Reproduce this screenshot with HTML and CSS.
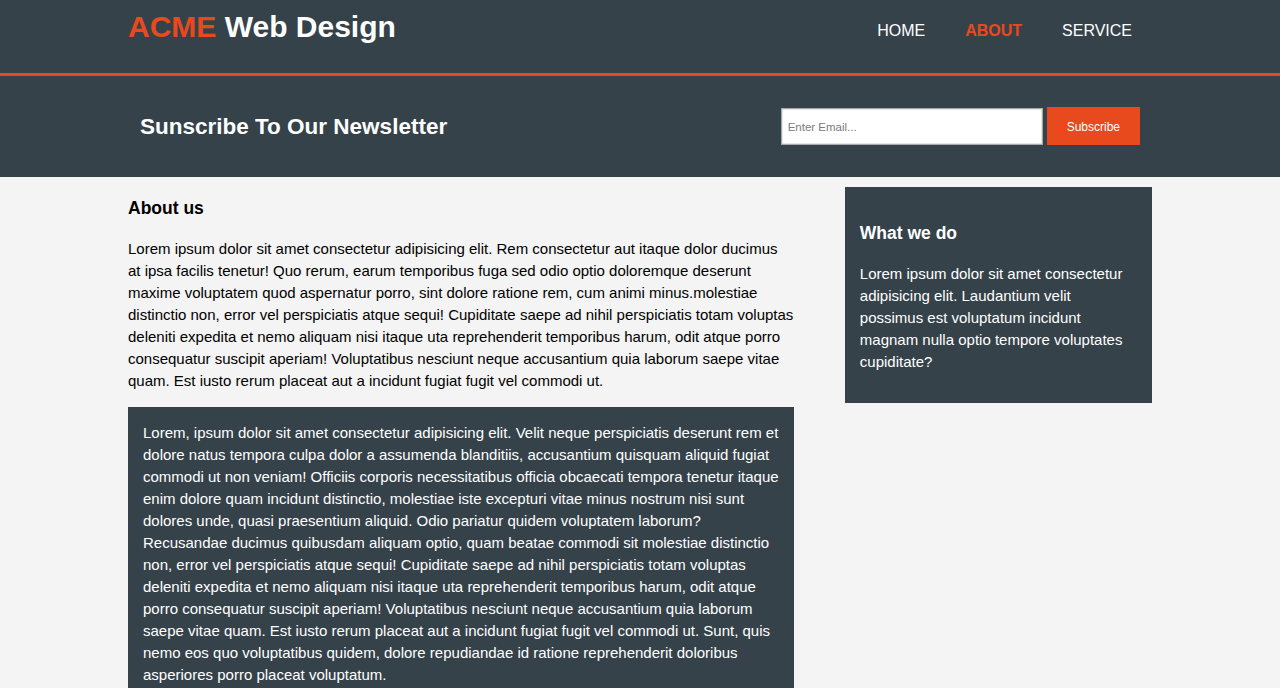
FILE: index.html
```html
<!DOCTYPE html>
<html lang="en">
<head>
<meta charset="utf-8">
<title>ACME Web Design | About</title>
<link rel="stylesheet" href="styles.css">
</head>
<body>
<header class="site-header">
  <div class="container header-inner">
    <div class="branding">
      <h1><span class="highlight">ACME</span> Web Design</h1>
    </div>
    <nav class="main-nav">
      <ul>
        <li><a href="#">Home</a></li>
        <li class="current"><a href="#">About</a></li>
        <li><a href="#">Service</a></li>
      </ul>
    </nav>
  </div>
</header>

<section class="newsletter">
  <div class="container newsletter-inner">
    <h1>Sunscribe To Our Newsletter</h1>
    <form class="newsletter-form">
      <input type="email" placeholder="Enter Email...">
      <button type="submit" class="button-1">Subscribe</button>
    </form>
  </div>
</section>

<section class="content">
  <div class="container content-inner">
    <article class="main-col">
      <h3 class="page-title">About us</h3>
      <p>Lorem ipsum dolor sit amet consectetur adipisicing elit. Rem consectetur aut itaque dolor ducimus at ipsa facilis tenetur! Quo rerum, earum temporibus fuga sed odio optio doloremque deserunt maxime voluptatem quod aspernatur porro, sint dolore ratione rem, cum animi minus.molestiae distinctio non, error vel perspiciatis atque sequi! Cupiditate saepe ad nihil perspiciatis totam voluptas deleniti expedita et nemo aliquam nisi itaque uta reprehenderit temporibus harum, odit atque porro consequatur suscipit aperiam! Voluptatibus nesciunt neque accusantium quia laborum saepe vitae quam. Est iusto rerum placeat aut a incidunt fugiat fugit vel commodi ut.</p>
      <p class="dark">Lorem, ipsum dolor sit amet consectetur adipisicing elit. Velit neque perspiciatis deserunt rem et dolore natus tempora culpa dolor a assumenda blanditiis, accusantium quisquam aliquid fugiat commodi ut non veniam! Officiis corporis necessitatibus officia obcaecati tempora tenetur itaque enim dolore quam incidunt distinctio, molestiae iste excepturi vitae minus nostrum nisi sunt dolores unde, quasi praesentium aliquid. Odio pariatur quidem voluptatem laborum? Recusandae ducimus quibusdam aliquam optio, quam beatae commodi sit molestiae distinctio non, error vel perspiciatis atque sequi! Cupiditate saepe ad nihil perspiciatis totam voluptas deleniti expedita et nemo aliquam nisi itaque uta reprehenderit temporibus harum, odit atque porro consequatur suscipit aperiam! Voluptatibus nesciunt neque accusantium quia laborum saepe vitae quam. Est iusto rerum placeat aut a incidunt fugiat fugit vel commodi ut. Sunt, quis nemo eos quo voluptatibus quidem, dolore repudiandae id ratione reprehenderit doloribus asperiores porro placeat voluptatum.</p>
    </article>
    <aside class="sidebar">
      <div class="dark">
        <h3>What we do</h3>
        <p>Lorem ipsum dolor sit amet consectetur adipisicing elit. Laudantium velit possimus est voluptatum incidunt magnam nulla optio tempore voluptates cupiditate?</p>
      </div>
    </aside>
  </div>
</section>
</body>
</html>
```

FILE: styles.css
```css
html, body {
  margin: 0;
  padding: 0;
}

body {
  font-family: "Liberation Sans", Arial, Helvetica, sans-serif;
  font-size: 15px;
  line-height: 22px;
  color: #000;
  background: #f4f4f4;
}

.container {
  width: 80%;
  margin: 0 auto;
}

/* Header */
.site-header {
  background: #35424a;
  color: #fff;
  height: 73px;
  border-bottom: 3px solid #e8491d;
}

.header-inner {
  display: flex;
  justify-content: space-between;
  align-items: flex-start;
}

.branding h1 {
  margin: 0;
  padding-top: 4px;
  font-size: 30px;
  line-height: 45px;
  font-weight: bold;
}

.highlight {
  color: #e8491d;
}

.main-nav ul {
  list-style: none;
  margin: 0;
  padding: 19px 0 0;
  display: flex;
}

.main-nav li {
  padding: 0 20px;
}

.main-nav a {
  color: #fff;
  text-decoration: none;
  text-transform: uppercase;
  font-size: 16px;
  line-height: 24px;
}

.main-nav .current a {
  color: #e8491d;
  font-weight: bold;
}

/* Newsletter */
.newsletter {
  background: #35424a;
  color: #fff;
  padding: 15px;
}

.newsletter-inner {
  display: flex;
  justify-content: space-between;
  align-items: flex-start;
  min-height: 71px;
}

.newsletter h1 {
  margin: 19px 0 0;
  font-size: 22.5px;
  line-height: 33px;
  font-weight: bold;
}

.newsletter-form {
  margin-top: 16px;
  display: flex;
  align-items: flex-end;
  gap: 4px;
}

.newsletter-form input {
  box-sizing: border-box;
  width: 262px;
  height: 37px;
  padding: 4px 6px;
  border: 1px solid #a9a9a9;
  box-shadow: inset 0 0 0 1px #e6e6e6;
  background: #fff;
  font-family: "Liberation Sans", Arial, sans-serif;
  font-size: 11.5px;
  color: #333;
  outline: none;
}

.newsletter-form input::placeholder {
  color: #7a7a7a;
}

.button-1 {
  height: 38px;
  background: #e8491d;
  border: 0;
  padding: 1px 20px 0;
  color: #fff;
  font-family: "Liberation Sans", Arial, sans-serif;
  font-size: 12px;
}

/* Content */
.content-inner {
  display: flex;
  justify-content: space-between;
  align-items: flex-start;
}

.main-col {
  width: 65%;
}

.main-col h3,
.sidebar h3 {
  font-size: 17.5px;
  line-height: 26px;
  font-weight: bold;
  margin: 18px 0 17px;
}

.main-col p {
  margin: 0 0 15px;
}

.main-col p.dark {
  margin: 0;
}

.sidebar {
  width: 30%;
  margin-top: 10px;
}

.dark {
  background: #35424a;
  color: #fff;
  padding: 15px;
}

.sidebar .dark h3 {
  margin: 18px 0 17px;
}

.sidebar .dark p {
  margin: 0 0 15px;
}
```
